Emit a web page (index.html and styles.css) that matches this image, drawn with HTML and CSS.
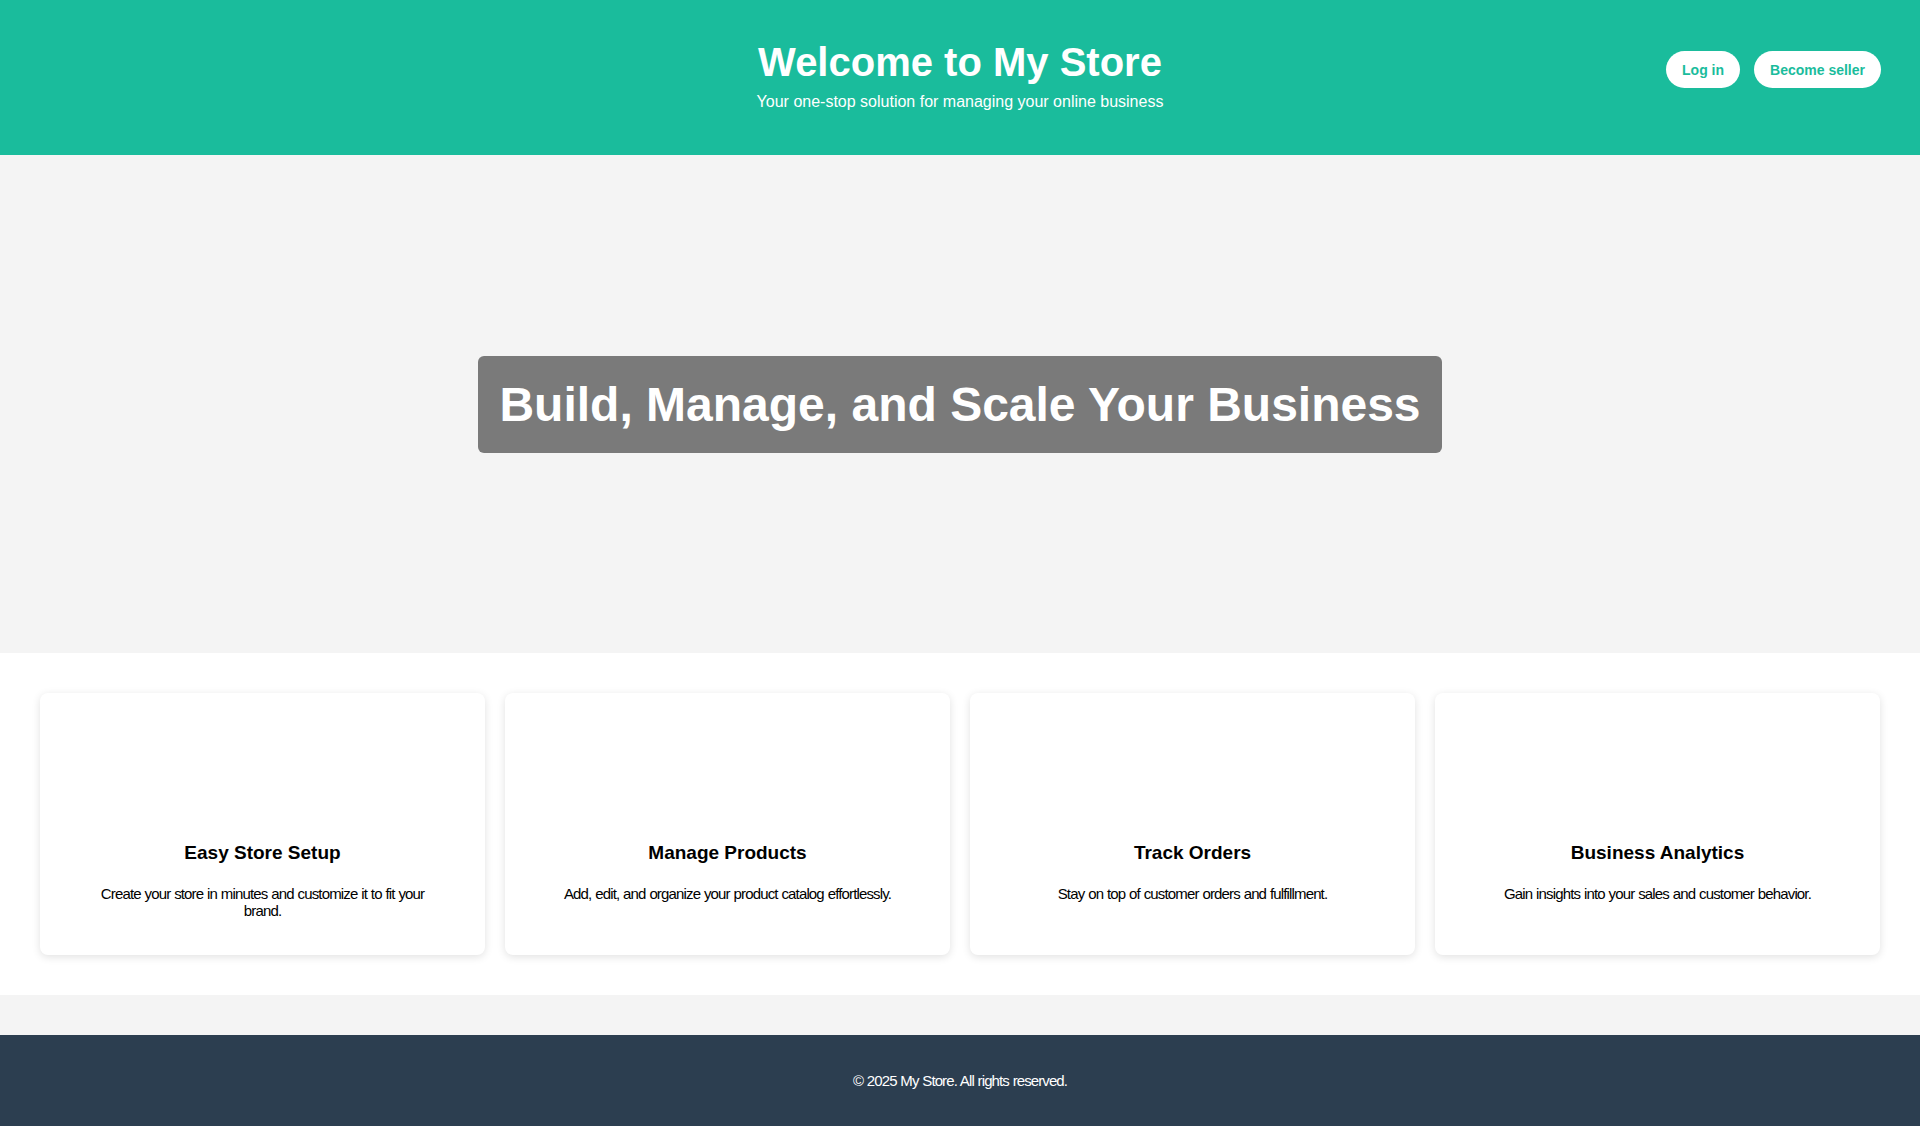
FILE: index.html
```html
<!DOCTYPE html>
<html lang="en">
<head>
<meta charset="utf-8">
<title>My Store</title>
<link rel="stylesheet" href="styles.css">
</head>
<body>
<header class="site-header">
  <div class="header-spacer"></div>
  <div class="brand">
    <h1 class="brand-title">Welcome to My Store</h1>
    <p class="brand-tagline">Your one-stop solution for managing your online business</p>
  </div>
  <nav class="header-actions">
    <a class="pill-btn" href="#">Log in</a>
    <a class="pill-btn" href="#">Become seller</a>
  </nav>
</header>

<section class="hero">
  <h2 class="hero-title">Build, Manage, and Scale Your Business</h2>
</section>

<section class="features">
  <div class="feature-card">
    <div class="feature-image"></div>
    <h3 class="feature-title">Easy Store Setup</h3>
    <p class="feature-text">Create your store in minutes and customize it to fit your brand.</p>
  </div>
  <div class="feature-card">
    <div class="feature-image"></div>
    <h3 class="feature-title">Manage Products</h3>
    <p class="feature-text">Add, edit, and organize your product catalog effortlessly.</p>
  </div>
  <div class="feature-card">
    <div class="feature-image"></div>
    <h3 class="feature-title">Track Orders</h3>
    <p class="feature-text">Stay on top of customer orders and fulfillment.</p>
  </div>
  <div class="feature-card">
    <div class="feature-image"></div>
    <h3 class="feature-title">Business Analytics</h3>
    <p class="feature-text">Gain insights into your sales and customer behavior.</p>
  </div>
</section>

<footer class="site-footer">
  <p class="footer-text">&copy; 2025 My Store. All rights reserved.</p>
</footer>
</body>
</html>
```

FILE: styles.css
```css
* { box-sizing: border-box; }

body {
  margin: 0;
  background: #f4f4f4;
  font-family: "Liberation Sans", Arial, sans-serif;
  color: #000;
}

.site-header {
  background: #1abc9c;
  color: #fff;
  display: grid;
  grid-template-columns: 1fr auto 1fr;
  padding: 39px 39px 44px;
}

.brand { text-align: center; }

.brand-title {
  margin: 0;
  font-size: 40px;
  font-weight: 700;
  line-height: 46px;
}

.brand-tagline {
  margin: 8px 0 0;
  font-size: 16px;
  line-height: 18px;
}

.header-actions {
  display: flex;
  justify-content: flex-end;
  align-items: flex-start;
  gap: 14px;
  padding-top: 12px;
}

.pill-btn {
  display: inline-flex;
  align-items: center;
  height: 37px;
  padding: 0 16px;
  background: #fff;
  color: #1abc9c;
  border-radius: 19px;
  font-size: 14px;
  font-weight: 700;
  text-decoration: none;
}

.hero {
  height: 498px;
  display: flex;
  align-items: center;
  justify-content: center;
  background: #f4f4f4;
}

.hero-title {
  margin: 0;
  padding: 20px 21px;
  background: #7a7a7a;
  color: #fff;
  border-radius: 6px;
  font-size: 48px;
  font-weight: 700;
  line-height: 57px;
}

.features {
  background: #fff;
  display: grid;
  grid-template-columns: repeat(4, 1fr);
  gap: 20px;
  padding: 40px;
}

.feature-card {
  background: #fff;
  border-radius: 8px;
  box-shadow: 0 2px 8px rgba(0, 0, 0, 0.12);
  padding: 20px 50px 36px;
  text-align: center;
}

.feature-image { height: 129px; }

.feature-title {
  margin: 0 0 21px;
  font-size: 19px;
  font-weight: 700;
  line-height: 22px;
}

.feature-text {
  margin: 0;
  font-size: 15px;
  line-height: 17px;
  letter-spacing: -0.85px;
  word-spacing: 0.5px;
}

.site-footer {
  margin-top: 40px;
  background: #2c3e50;
  color: #fff;
  text-align: center;
  padding: 37px 20px 36px;
}

.footer-text {
  margin: 0;
  font-size: 15px;
  line-height: 18px;
  letter-spacing: -0.9px;
  word-spacing: 0.5px;
}
```
